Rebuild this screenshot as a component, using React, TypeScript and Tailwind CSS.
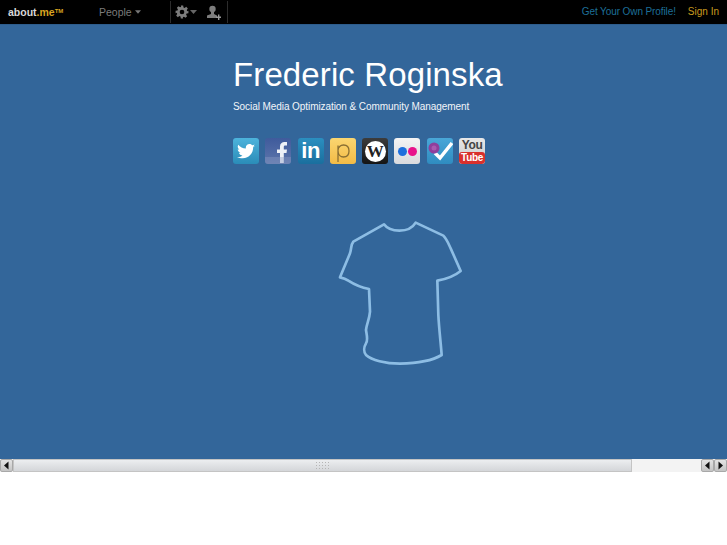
import React from "react";

const font = { fontFamily: '"Liberation Sans", Arial, sans-serif' };

function Tile({ className, children }: { className: string; children: React.ReactNode }) {
  return (
    <div className={`relative w-[26px] h-[26px] rounded-[3px] overflow-hidden flex items-center justify-center shrink-0 ${className}`}>
      {children}
    </div>
  );
}

function Arrow({ dir }: { dir: "l" | "r" }) {
  return (
    <div className="w-[13px] h-[13px] bg-gradient-to-b from-[#e4e4e4] to-[#c4c4c4] border border-[#a8a8a8] rounded-[2px] flex items-center justify-center">
      <svg width="7" height="9" viewBox="0 0 7 9">
        <path d={dir === "l" ? "M5.500 0.500V8.500L1 4.500Z" : "M1.500 0.500V8.500L6 4.500Z"} fill="#111" />
      </svg>
    </div>
  );
}

export default function App() {
  return (
    <div className="w-[727px] h-[545px] bg-white overflow-hidden flex flex-col" style={font}>
      {/* top bar */}
      <div className="h-[24px] shrink-0 bg-black flex items-center text-[10px] relative">
        <div className="w-[99px] pl-[8px] font-bold text-[10.500px] text-[#d8d8d8] leading-none whitespace-nowrap">
          about<span className="text-[#d9a520]">.me</span>
          <span className="text-[#d9a520] text-[6px] align-[3px]">TM</span>
        </div>
        <div className="w-[71px] flex items-center gap-[3px] text-[10.500px] text-[#7b7b7b] leading-none">
          <span>People</span>
          <svg width="6" height="4" viewBox="0 0 7 4"><path d="M0 0H7L3.500 4Z" fill="#777" /></svg>
        </div>
        <div className="w-px h-[22px] bg-[#2c2c2c]" />
        <div className="pl-[4px] w-[35px] flex items-center gap-[1px]">
          <svg width="14" height="14" viewBox="0 0 24 24" fill="#7c7c7c">
            <path fillRule="evenodd" d="M10 1h4l.6 3.200 1.900.8 2.700-1.800 2.800 2.800-1.800 2.700.8 1.900L23 10v4l-3.200.6-.8 1.900 1.800 2.700-2.800 2.800-2.700-1.800-1.900.8L14 23h-4l-.6-3.200-1.900-.8-2.700 1.800-2.800-2.800 1.800-2.700-.8-1.900L1 14v-4l3.200-.6.8-1.900L3.200 4.800 6 2l2.700 1.800 1.900-.8zM12 8a4 4 0 100 8 4 4 0 000-8z" />
          </svg>
          <svg width="7" height="4" viewBox="0 0 7 4"><path d="M0 0H7L3.500 4Z" fill="#666" /></svg>
        </div>
        <div className="w-[21px] flex items-center">
          <svg width="15" height="15" viewBox="0 0 15 15" fill="#7d7d7d">
            <circle cx="6.500" cy="4" r="3.200" />
            <path d="M5 7h3v2l3 1.600V13H1v-2.400L5 9z" />
            <path d="M10 11.500h2V9.500h1.400v2h1.600v1.400h-1.600V15H12v-2.100h-2z" fill="#999" />
          </svg>
        </div>
        <div className="w-px h-[22px] bg-[#2c2c2c]" />
        <div className="ml-auto pr-[8px] flex items-center gap-[12px] leading-none">
          <span className="text-[#1d6f98] tracking-[-0.100px]">Get Your Own Profile!</span>
          <span className="text-[#c99a1e]">Sign In</span>
        </div>
      </div>

      {/* page */}
      <div className="h-[435px] shrink-0 bg-[#33669a] flex flex-col pl-[233px] border-t border-[#2d5c8c]">
        <h1 className="mt-[30px] text-[33px] leading-[40px] text-white font-normal tracking-[0.120px] whitespace-nowrap">
          Frederic Roginska
        </h1>
        <p className="mt-[5px] text-[10px] tracking-[-0.070px] leading-[14px] text-[#f2f5f9] whitespace-nowrap">
          Social Media Optimization &amp; Community Management
        </p>

        <div className="mt-[24px] flex gap-[6.300px]">
          <Tile className="bg-gradient-to-b from-[#4db3dc] to-[#2a8cb8]">
            <svg width="18" height="15" viewBox="0 0 24 20" fill="#fff">
              <path d="M24 2.400c-.9.4-1.800.7-2.800.8 1-.6 1.800-1.600 2.200-2.700-1 .6-2 1-3.100 1.200C19.300.7 18 0 16.600 0c-2.700 0-4.900 2.200-4.900 4.900 0 .4 0 .8.100 1.100C7.700 5.800 4.100 3.900 1.700.9c-.4.700-.7 1.600-.7 2.500 0 1.700.9 3.200 2.200 4.100-.8 0-1.600-.2-2.200-.6v.1c0 2.400 1.700 4.400 3.900 4.800-.7.200-1.500.2-2.200.1.600 2 2.400 3.400 4.600 3.400-1.700 1.300-3.800 2.100-6.100 2.100-.4 0-.8 0-1.200-.1C2.200 18.200 4.800 19 7.500 19c9.100 0 14-7.500 14-14v-.6c1-.7 1.800-1.600 2.500-2z" />
            </svg>
          </Tile>
          <Tile className="bg-gradient-to-b from-[#3f5b9c] to-[#5d75ab]">
            <svg width="26" height="26" viewBox="0 0 26 26">
              <path d="M15 25V15h-3v-3.500h3V8.500C15 5.500 17 4 19.500 4H22v3.500h-1.800c-1 0-1.400.5-1.400 1.500v2.500H22l-.5 3.500h-2.700v10z" fill="#eef1f7" />
            </svg>
            <div className="absolute bottom-0 inset-x-0 h-[7px] bg-[#8a9bc4]/40" />
          </Tile>
          <Tile className="bg-gradient-to-b from-[#2b8fc0] to-[#1a6f9e]">
            <span className="text-[22px] leading-none font-bold text-white tracking-[-0.500px]">in</span>
          </Tile>
          <Tile className="bg-gradient-to-b from-[#fbd670] to-[#f3bb45]">
            <svg width="26" height="26" viewBox="0 0 26 26" fill="none">
              <path d="M8 24V7.500M8 12.500C8 9 10.500 7 13.500 7C17 7 19 9.500 19 13C19 16.500 17 19 13.500 19C10.500 19 8 16.500 8 12.500Z" stroke="#8a6f32" strokeWidth="1.300" />
            </svg>
          </Tile>
          <Tile className="bg-gradient-to-b from-[#3c3c3c] to-[#151515]">
            <div className="w-[21px] h-[21px] rounded-full bg-white flex items-center justify-center">
              <span className="text-[17px] leading-none font-bold text-[#222]" style={{ fontFamily: '"Liberation Serif", serif' }}>W</span>
            </div>
          </Tile>
          <Tile className="bg-gradient-to-b from-[#f4f4f4] to-[#d9dadd] gap-[1px]">
            <div className="w-[9px] h-[9px] rounded-full bg-[#1e6fdc]" />
            <div className="w-[9px] h-[9px] rounded-full bg-[#e8128a]" />
          </Tile>
          <Tile className="bg-gradient-to-b from-[#49a7d8] to-[#2f8cc0]">
            <svg width="26" height="26" viewBox="0 0 26 26">
              <path d="M8 15l5 5L25 5" fill="none" stroke="#fff" strokeWidth="3.500" />
              <circle cx="7" cy="10" r="5.500" fill="#8f3f9c" />
              <circle cx="7" cy="10" r="2.500" fill="#a95ab0" />
            </svg>
          </Tile>
          <Tile className="bg-gradient-to-b from-[#e8e8e8] to-[#c9c9c9] flex-col justify-start">
            <span className="text-[12px] leading-[14px] font-bold text-[#444] tracking-[-0.300px]">You</span>
            <div className="absolute bottom-0 inset-x-0 h-[12px] bg-[#d9302c] rounded-[3px] flex items-center justify-center">
              <span className="text-[10px] leading-none font-bold text-white tracking-[-0.300px]">Tube</span>
            </div>
          </Tile>
        </div>

        <svg className="mt-[51px] ml-[97px]" width="140" height="155" viewBox="0 0 420 465" fill="none">
          <path
            d="M162 28C172 42 190 47 208 47C228 47 247 40 257 23L340 62C350 72 355 85 362 100L392 168C375 182 350 192 322 197L325 300C327 340 332 380 335 420C310 435 260 445 210 446C165 446 125 435 108 420C100 410 102 395 108 385C115 375 110 360 108 345C110 325 118 315 120 290L117 222C95 218 75 210 55 197C48 192 40 189 30 187L60 115C65 100 62 90 70 80Z"
            stroke="#8dbde4"
            strokeWidth="8"
            strokeLinejoin="round"
          />
        </svg>
      </div>

      {/* scrollbar */}
      <div className="h-[13px] shrink-0 flex bg-[#f3f3f3]">
        <Arrow dir="l" />
        <div className="w-[619px] bg-gradient-to-b from-[#eceef0] to-[#d4d6d9] border border-[#c4c4c4] flex items-center justify-center">
          <div className="w-[15px] h-[9px] bg-[radial-gradient(#b5b5b5_1px,transparent_1px)] bg-[length:3px_3px]" />
        </div>
        <div className="flex-1" />
        <Arrow dir="l" />
        <Arrow dir="r" />
      </div>
      <div className="flex-1 bg-white" />
    </div>
  );
}
